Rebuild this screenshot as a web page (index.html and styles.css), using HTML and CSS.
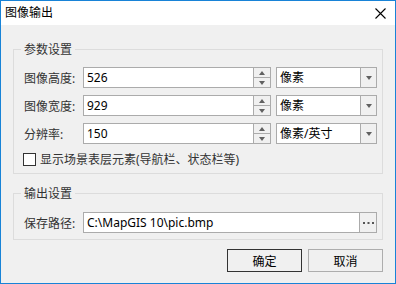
FILE: index.html
```html
<!DOCTYPE html>
<html>
<head>
<meta charset="utf-8">
<link rel="stylesheet" href="styles.css">
</head>
<body>
<div class="window">
  <div class="titlebar">
    <span class="title">图像输出</span>
    <svg class="close" width="11" height="11" viewBox="0 0 11 11"><path d="M0.5 0.5 L10.5 10.5 M10.5 0.5 L0.5 10.5" stroke="#000" stroke-width="1.1" fill="none"/></svg>
  </div>
  <div class="group g1">
    <div class="legend">参数设置</div>
    <div class="rows">
      <div class="row">
        <span class="label">图像高度:</span>
        <div class="spin">
          <div class="field">526</div>
          <div class="spinbtns"><div class="sb"><i class="up"></i></div><div class="sb"><i class="down"></i></div></div>
        </div>
        <div class="combo"><span class="val">像素</span><span class="arrow"><i class="down"></i></span></div>
      </div>
      <div class="row">
        <span class="label">图像宽度:</span>
        <div class="spin">
          <div class="field">929</div>
          <div class="spinbtns"><div class="sb"><i class="up"></i></div><div class="sb"><i class="down"></i></div></div>
        </div>
        <div class="combo"><span class="val">像素</span><span class="arrow"><i class="down"></i></span></div>
      </div>
      <div class="row">
        <span class="label">分辨率:</span>
        <div class="spin">
          <div class="field">150</div>
          <div class="spinbtns"><div class="sb"><i class="up"></i></div><div class="sb"><i class="down"></i></div></div>
        </div>
        <div class="combo"><span class="val">像素/英寸</span><span class="arrow"><i class="down"></i></span></div>
      </div>
      <div class="check">
        <span class="box"></span>
        <span>显示场景表层元素(导航栏、状态栏等)</span>
      </div>
    </div>
  </div>
  <div class="group g2">
    <div class="legend">输出设置</div>
    <div class="row path-row">
      <span class="label">保存路径:</span>
      <div class="pathfield">
        <span class="val">C:\MapGIS 10\pic.bmp</span>
        <span class="dots"><svg width="11" height="2" viewBox="0 0 11 2"><rect x="0" y="0" width="2" height="2" fill="#555"/><rect x="4.5" y="0" width="2" height="2" fill="#555"/><rect x="9" y="0" width="2" height="2" fill="#555"/></svg></span>
      </div>
    </div>
  </div>
  <div class="buttons">
    <div class="btn default">确定</div>
    <div class="btn">取消</div>
  </div>
</div>
</body>
</html>
```
FILE: styles.css
```css
* { box-sizing: border-box; }
body {
  margin: 0;
  font-family: "Noto Sans", "Noto Sans CJK SC", sans-serif;
  font-size: 12px;
  color: #1e1e1e;
}
.window {
  width: 396px;
  height: 284px;
  border: 1px solid #1883d7;
  background: #f0f0f0;
  display: flex;
  flex-direction: column;
}
.titlebar {
  height: 24px;
  flex: none;
  background: #fff;
  display: flex;
  align-items: center;
  justify-content: space-between;
  padding: 0 9px 0 4px;
}
.title {
  font-size: 12px;
  line-height: 16px;
  color: #000;
}
.close { display: block; }
.group {
  margin: 24px 12px 0;
  border: 1px solid #dcdcdc;
  padding: 0 5px 6px 10px;
}
.group.g2 { margin-top: 19px; }
.legend {
  width: fit-content;
  height: 16px;
  line-height: 16px;
  margin: -8px 0 0 -3px;
  padding: 0 3px;
  background: #f0f0f0;
  color: #333;
}
.rows {
  display: flex;
  flex-direction: column;
  gap: 7px;
  margin-top: 9px;
}
.row {
  display: flex;
  align-items: center;
  height: 21px;
}
.path-row { margin-top: 10px; }
.label {
  width: 59px;
  color: #333;
}
.spin {
  display: flex;
  height: 21px;
}
.field {
  width: 171px;
  height: 21px;
  border: 1px solid #ababab;
  background: #fff;
  padding-left: 3px;
  line-height: 19px;
  color: #000;
}
.spinbtns {
  width: 17px;
  display: flex;
  flex-direction: column;
}
.sb {
  flex: 1;
  border: 1px solid #ababab;
  border-left: none;
  background: #f0f0f0;
  display: flex;
  align-items: center;
  justify-content: center;
}
.sb + .sb { border-top: none; }
i.up, i.down {
  display: block;
  width: 0;
  height: 0;
  border-left: 3.5px solid transparent;
  border-right: 3.5px solid transparent;
}
i.up { border-bottom: 4px solid #606060; }
i.down { border-top: 4px solid #606060; }
.combo {
  margin-left: 5px;
  width: 101px;
  height: 21px;
  display: flex;
  border: 1px solid #ababab;
  background: #fff;
}
.combo .val {
  flex: 1;
  padding-left: 3px;
  line-height: 19px;
  color: #000;
}
.combo .arrow {
  width: 16px;
  border-left: 1px solid #ababab;
  background: #f0f0f0;
  display: flex;
  align-items: center;
  justify-content: center;
}
.check {
  display: flex;
  align-items: center;
  gap: 4px;
  height: 16px;
  margin-left: -1px;
  color: #333;
}
.box {
  width: 13px;
  height: 13px;
  border: 1px solid #333;
  background: #fff;
}
.pathfield {
  width: 294px;
  height: 21px;
  display: flex;
  border: 1px solid #ababab;
  background: #fff;
}
.pathfield .val {
  flex: 1;
  padding-left: 3px;
  line-height: 19px;
  color: #000;
}
.dots {
  width: 17px;
  border-left: 1px solid #ababab;
  background: #f0f0f0;
  display: flex;
  align-items: center;
  justify-content: center;
}
.dots svg { display: block; }
.buttons {
  display: flex;
  justify-content: flex-end;
  gap: 6px;
  margin: 9px 12px 0;
}
.btn {
  width: 75px;
  height: 23px;
  border: 1px solid #adadad;
  background: #f0f0f0;
  display: flex;
  align-items: center;
  justify-content: center;
  color: #000;
}
.btn.default { border-color: #333; }
```
